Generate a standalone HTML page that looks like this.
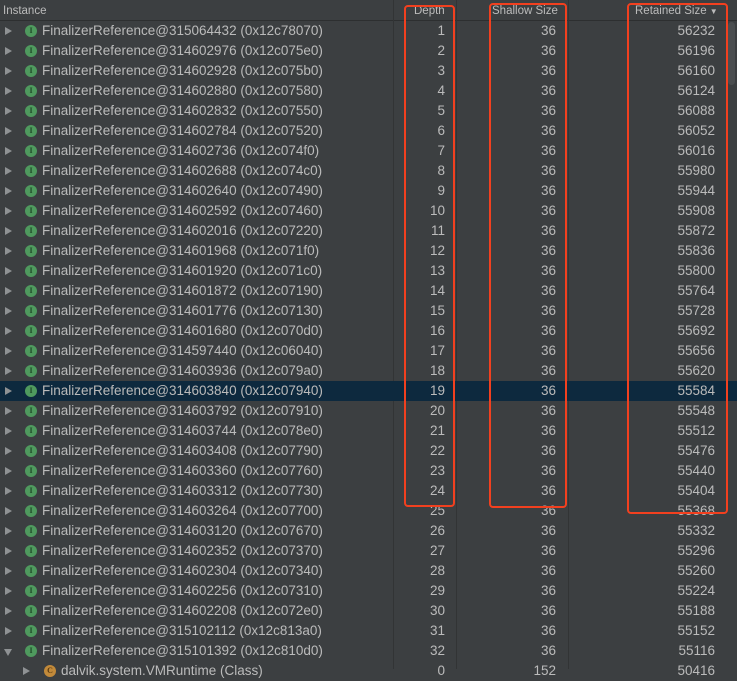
<!DOCTYPE html>
<html><head><meta charset="utf-8"><style>
html,body{margin:0;padding:0;background:#3c3f41;width:737px;height:669px;overflow:hidden;font-family:"Liberation Sans",sans-serif;font-size:13.5px;color:#bbbbbb}
.hdr{position:absolute;left:0;top:0;width:737px;height:20px;background:#3c3f41;border-bottom:1px solid #2d2f30;font-size:11.5px;line-height:23px}
.hdr span{position:absolute;top:0}
.vl{position:absolute;top:0;width:1px;height:669px;background:#323435}
.row{position:absolute;left:0;width:737px;height:20px;line-height:20px}
.row.sel{background:#0d293e}
i{font-style:normal}
.tri{position:absolute;left:5px;top:6px;width:0;height:0;border-top:4px solid transparent;border-bottom:4px solid transparent;border-left:7px solid #8f9294}
.tri.d{left:4px;top:8px;border-left:4px solid transparent;border-right:4px solid transparent;border-top:7px solid #8f9294;border-bottom:0}
.ic{position:absolute;left:25px;top:4px;width:12px;height:12px;border-radius:50%;background:#4f9a5e;color:#1f4a28;font-size:8px;line-height:12px;text-align:center;font-weight:bold;font-family:"Liberation Serif",serif}
.nm{position:absolute;left:42px;top:0;white-space:nowrap}
.c1,.c2,.c3{position:absolute;top:0;text-align:right}
.c1{right:292px}.c2{right:181px}.c3{right:22px}
.box{position:absolute;border:2.5px solid #f2401f;border-radius:4px;box-sizing:border-box}
.sb{position:absolute;left:728px;top:22px;width:7px;height:63px;border-radius:4px;background:#4b4e50}
</style></head><body>
<div class="hdr"><span style="left:3px">Instance</span><span style="left:414px">Depth</span><span style="left:492px">Shallow Size</span><span style="left:635px">Retained Size <span style="position:static;font-size:8px">▼</span></span></div>
<div class="vl" style="left:393px"></div><div class="vl" style="left:456px"></div><div class="vl" style="left:568px"></div>

<div class="row" style="top:21px"><i class="tri"></i><i class="ic">I</i><span class="nm">FinalizerReference@315064432 (0x12c78070)</span><span class="c1">1</span><span class="c2">36</span><span class="c3">56232</span></div>
<div class="row" style="top:41px"><i class="tri"></i><i class="ic">I</i><span class="nm">FinalizerReference@314602976 (0x12c075e0)</span><span class="c1">2</span><span class="c2">36</span><span class="c3">56196</span></div>
<div class="row" style="top:61px"><i class="tri"></i><i class="ic">I</i><span class="nm">FinalizerReference@314602928 (0x12c075b0)</span><span class="c1">3</span><span class="c2">36</span><span class="c3">56160</span></div>
<div class="row" style="top:81px"><i class="tri"></i><i class="ic">I</i><span class="nm">FinalizerReference@314602880 (0x12c07580)</span><span class="c1">4</span><span class="c2">36</span><span class="c3">56124</span></div>
<div class="row" style="top:101px"><i class="tri"></i><i class="ic">I</i><span class="nm">FinalizerReference@314602832 (0x12c07550)</span><span class="c1">5</span><span class="c2">36</span><span class="c3">56088</span></div>
<div class="row" style="top:121px"><i class="tri"></i><i class="ic">I</i><span class="nm">FinalizerReference@314602784 (0x12c07520)</span><span class="c1">6</span><span class="c2">36</span><span class="c3">56052</span></div>
<div class="row" style="top:141px"><i class="tri"></i><i class="ic">I</i><span class="nm">FinalizerReference@314602736 (0x12c074f0)</span><span class="c1">7</span><span class="c2">36</span><span class="c3">56016</span></div>
<div class="row" style="top:161px"><i class="tri"></i><i class="ic">I</i><span class="nm">FinalizerReference@314602688 (0x12c074c0)</span><span class="c1">8</span><span class="c2">36</span><span class="c3">55980</span></div>
<div class="row" style="top:181px"><i class="tri"></i><i class="ic">I</i><span class="nm">FinalizerReference@314602640 (0x12c07490)</span><span class="c1">9</span><span class="c2">36</span><span class="c3">55944</span></div>
<div class="row" style="top:201px"><i class="tri"></i><i class="ic">I</i><span class="nm">FinalizerReference@314602592 (0x12c07460)</span><span class="c1">10</span><span class="c2">36</span><span class="c3">55908</span></div>
<div class="row" style="top:221px"><i class="tri"></i><i class="ic">I</i><span class="nm">FinalizerReference@314602016 (0x12c07220)</span><span class="c1">11</span><span class="c2">36</span><span class="c3">55872</span></div>
<div class="row" style="top:241px"><i class="tri"></i><i class="ic">I</i><span class="nm">FinalizerReference@314601968 (0x12c071f0)</span><span class="c1">12</span><span class="c2">36</span><span class="c3">55836</span></div>
<div class="row" style="top:261px"><i class="tri"></i><i class="ic">I</i><span class="nm">FinalizerReference@314601920 (0x12c071c0)</span><span class="c1">13</span><span class="c2">36</span><span class="c3">55800</span></div>
<div class="row" style="top:281px"><i class="tri"></i><i class="ic">I</i><span class="nm">FinalizerReference@314601872 (0x12c07190)</span><span class="c1">14</span><span class="c2">36</span><span class="c3">55764</span></div>
<div class="row" style="top:301px"><i class="tri"></i><i class="ic">I</i><span class="nm">FinalizerReference@314601776 (0x12c07130)</span><span class="c1">15</span><span class="c2">36</span><span class="c3">55728</span></div>
<div class="row" style="top:321px"><i class="tri"></i><i class="ic">I</i><span class="nm">FinalizerReference@314601680 (0x12c070d0)</span><span class="c1">16</span><span class="c2">36</span><span class="c3">55692</span></div>
<div class="row" style="top:341px"><i class="tri"></i><i class="ic">I</i><span class="nm">FinalizerReference@314597440 (0x12c06040)</span><span class="c1">17</span><span class="c2">36</span><span class="c3">55656</span></div>
<div class="row" style="top:361px"><i class="tri"></i><i class="ic">I</i><span class="nm">FinalizerReference@314603936 (0x12c079a0)</span><span class="c1">18</span><span class="c2">36</span><span class="c3">55620</span></div>
<div class="row sel" style="top:381px"><i class="tri"></i><i class="ic">I</i><span class="nm">FinalizerReference@314603840 (0x12c07940)</span><span class="c1">19</span><span class="c2">36</span><span class="c3">55584</span></div>
<div class="row" style="top:401px"><i class="tri"></i><i class="ic">I</i><span class="nm">FinalizerReference@314603792 (0x12c07910)</span><span class="c1">20</span><span class="c2">36</span><span class="c3">55548</span></div>
<div class="row" style="top:421px"><i class="tri"></i><i class="ic">I</i><span class="nm">FinalizerReference@314603744 (0x12c078e0)</span><span class="c1">21</span><span class="c2">36</span><span class="c3">55512</span></div>
<div class="row" style="top:441px"><i class="tri"></i><i class="ic">I</i><span class="nm">FinalizerReference@314603408 (0x12c07790)</span><span class="c1">22</span><span class="c2">36</span><span class="c3">55476</span></div>
<div class="row" style="top:461px"><i class="tri"></i><i class="ic">I</i><span class="nm">FinalizerReference@314603360 (0x12c07760)</span><span class="c1">23</span><span class="c2">36</span><span class="c3">55440</span></div>
<div class="row" style="top:481px"><i class="tri"></i><i class="ic">I</i><span class="nm">FinalizerReference@314603312 (0x12c07730)</span><span class="c1">24</span><span class="c2">36</span><span class="c3">55404</span></div>
<div class="row" style="top:501px"><i class="tri"></i><i class="ic">I</i><span class="nm">FinalizerReference@314603264 (0x12c07700)</span><span class="c1">25</span><span class="c2">36</span><span class="c3">55368</span></div>
<div class="row" style="top:521px"><i class="tri"></i><i class="ic">I</i><span class="nm">FinalizerReference@314603120 (0x12c07670)</span><span class="c1">26</span><span class="c2">36</span><span class="c3">55332</span></div>
<div class="row" style="top:541px"><i class="tri"></i><i class="ic">I</i><span class="nm">FinalizerReference@314602352 (0x12c07370)</span><span class="c1">27</span><span class="c2">36</span><span class="c3">55296</span></div>
<div class="row" style="top:561px"><i class="tri"></i><i class="ic">I</i><span class="nm">FinalizerReference@314602304 (0x12c07340)</span><span class="c1">28</span><span class="c2">36</span><span class="c3">55260</span></div>
<div class="row" style="top:581px"><i class="tri"></i><i class="ic">I</i><span class="nm">FinalizerReference@314602256 (0x12c07310)</span><span class="c1">29</span><span class="c2">36</span><span class="c3">55224</span></div>
<div class="row" style="top:601px"><i class="tri"></i><i class="ic">I</i><span class="nm">FinalizerReference@314602208 (0x12c072e0)</span><span class="c1">30</span><span class="c2">36</span><span class="c3">55188</span></div>
<div class="row" style="top:621px"><i class="tri"></i><i class="ic">I</i><span class="nm">FinalizerReference@315102112 (0x12c813a0)</span><span class="c1">31</span><span class="c2">36</span><span class="c3">55152</span></div>
<div class="row" style="top:641px"><i class="tri d"></i><i class="ic">I</i><span class="nm">FinalizerReference@315101392 (0x12c810d0)</span><span class="c1">32</span><span class="c2">36</span><span class="c3">55116</span></div>
<div class="row" style="top:661px"><i class="tri" style="left:23px"></i><i class="ic" style="left:44px;background:#c28a3a;color:#5a3a10">C</i><span class="nm" style="left:61px">dalvik.system.VMRuntime (Class)</span><span class="c1">0</span><span class="c2">152</span><span class="c3">50416</span></div>

<div class="sb"></div>
<div class="box" style="left:404px;top:5px;width:51px;height:502px"></div>
<div class="box" style="left:489px;top:3px;width:78px;height:505px"></div>
<div class="box" style="left:627px;top:3px;width:101px;height:511px"></div>
</body></html>
